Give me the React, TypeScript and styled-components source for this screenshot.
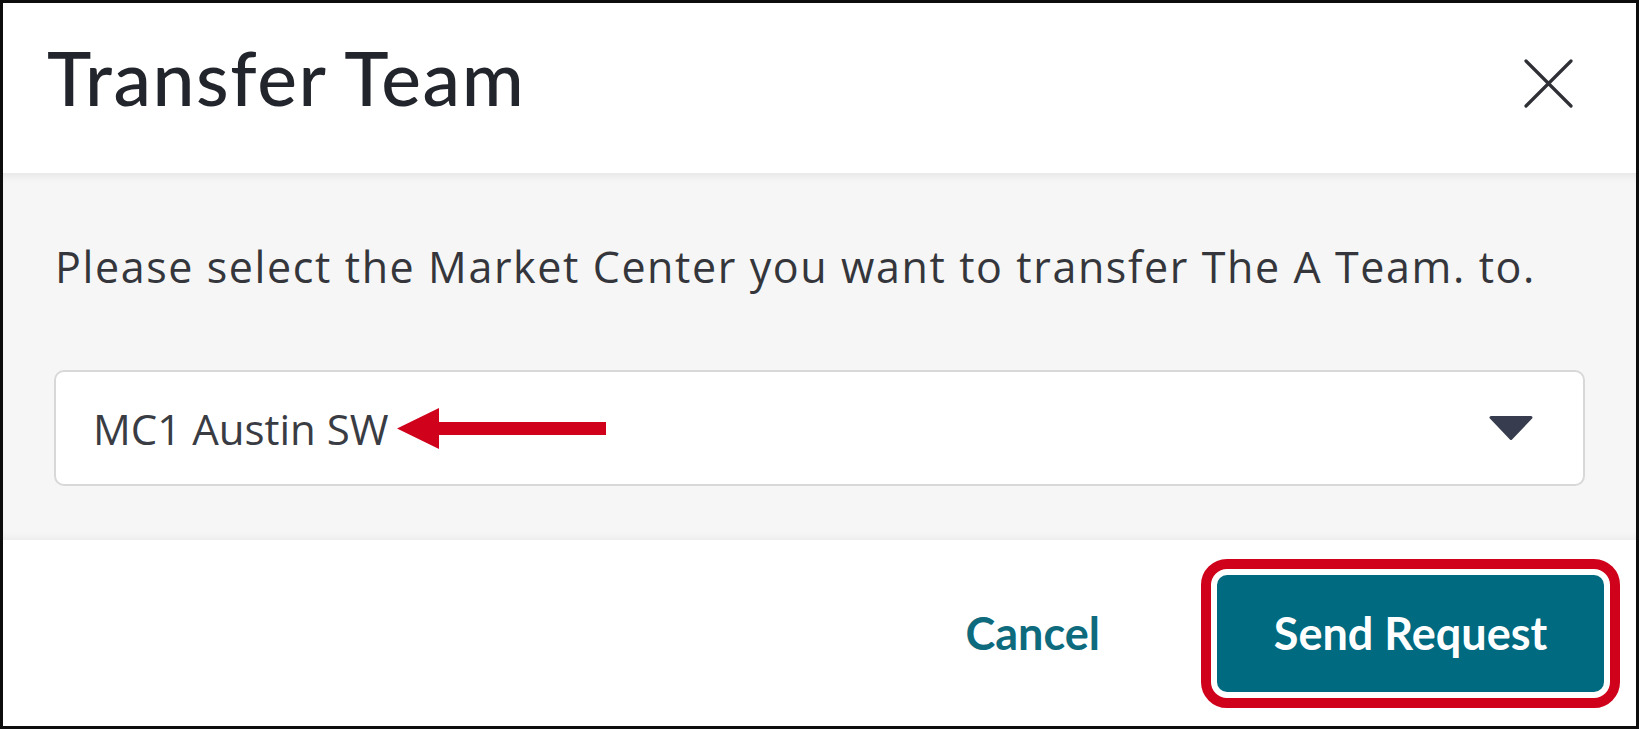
import React from "react";
import styled, { createGlobalStyle } from "styled-components";

const Global = createGlobalStyle`
  html, body { margin: 0; padding: 0; background: #ffffff; }
  * { box-sizing: border-box; }
  body { font-family: "Lato", "Noto Sans", "Liberation Sans", sans-serif; }
`;

const Frame = styled.div`
  width: 1639px;
  height: 729px;
  border: 3px solid #0d0d0d;
  display: flex;
  flex-direction: column;
  background: #ffffff;
  overflow: hidden;
`;

const Header = styled.header`
  height: 170px;
  flex: none;
  display: flex;
  align-items: center;
  justify-content: space-between;
  padding: 0 63px 0 44px;
  background: #ffffff;
`;

const Title = styled.h1`
  margin: 0 0 22px 0;
  font-family: "Lato", sans-serif;
  font-size: 75px;
  line-height: 1;
  font-weight: 500;
  color: #23252c;
  letter-spacing: 1.6px;
`;

const CloseButton = styled.button`
  border: none;
  background: none;
  padding: 0;
  margin-bottom: 10px;
  width: 49px;
  height: 49px;
  display: flex;
  align-items: center;
  justify-content: center;
  cursor: pointer;
`;

const Body = styled.section`
  height: 367px;
  flex: none;
  background: #f6f6f6;
  box-shadow: inset 0 9px 8px -6px rgba(0, 0, 0, 0.07), inset 0 -8px 8px -6px rgba(0, 0, 0, 0.05);
  padding: 64px 51px 0 51px;
  display: flex;
  flex-direction: column;
`;

const Prompt = styled.p`
  margin: 0 0 0 1px;
  font-family: "Open Sans", "Noto Sans", sans-serif;
  font-size: 43px;
  line-height: 60px;
  letter-spacing: 1.6px;
  color: #34363c;
`;

const SelectBox = styled.div`
  margin-top: 73px;
  height: 116px;
  background: #ffffff;
  border: 2px solid #d8d8d8;
  border-radius: 10px;
  display: flex;
  align-items: center;
  justify-content: space-between;
  padding: 0 49px 0 37px;
`;

const SelectValue = styled.div`
  display: flex;
  align-items: center;
  gap: 8px;
  font-family: "Open Sans", "Noto Sans", sans-serif;
  font-size: 42px;
  color: #3a3c44;
`;

const Footer = styled.footer`
  flex: 1;
  background: #ffffff;
  display: flex;
  align-items: center;
  justify-content: flex-end;
  padding-right: 16px;
  gap: 101px;
`;

const CancelButton = styled.button`
  border: none;
  background: none;
  padding: 0;
  font-family: inherit;
  font-size: 45px;
  font-weight: 700;
  color: #0e6b7d;
  cursor: pointer;
`;

const Highlight = styled.div`
  border: 10px solid #d0021b;
  border-radius: 26px;
  padding: 6px;
  background: #ffffff;
`;

const PrimaryButton = styled.button`
  width: 387px;
  height: 117px;
  border: none;
  border-radius: 10px;
  background: #006a80;
  color: #ffffff;
  font-family: inherit;
  font-size: 45px;
  font-weight: 700;
  cursor: pointer;
`;

export default function App() {
  return (
    <>
      <Global />
      <Frame>
        <Header>
          <Title>Transfer Team</Title>
          <CloseButton aria-label="Close">
            <svg width="49" height="49" viewBox="0 0 49 49">
              <path d="M2 2 L47 47 M47 2 L2 47" stroke="#2e3036" strokeWidth="3.2" strokeLinecap="round" />
            </svg>
          </CloseButton>
        </Header>
        <Body>
          <Prompt>Please select the Market Center you want to transfer The A Team. to.</Prompt>
          <SelectBox>
            <SelectValue>
              <span>MC1 Austin SW</span>
              <svg width="209" height="41" viewBox="0 0 209 41">
                <polygon points="0,20.5 42,0 42,14 209,14 209,27 42,27 42,41" fill="#d0021b" />
              </svg>
            </SelectValue>
            <svg width="46" height="26" viewBox="0 0 46 26">
              <path d="M3 2.5 L43 2.5 L23 23.5 Z" fill="#373d4e" stroke="#373d4e" strokeWidth="3" strokeLinejoin="round" />
            </svg>
          </SelectBox>
        </Body>
        <Footer>
          <CancelButton>Cancel</CancelButton>
          <Highlight>
            <PrimaryButton>Send Request</PrimaryButton>
          </Highlight>
        </Footer>
      </Frame>
    </>
  );
}
